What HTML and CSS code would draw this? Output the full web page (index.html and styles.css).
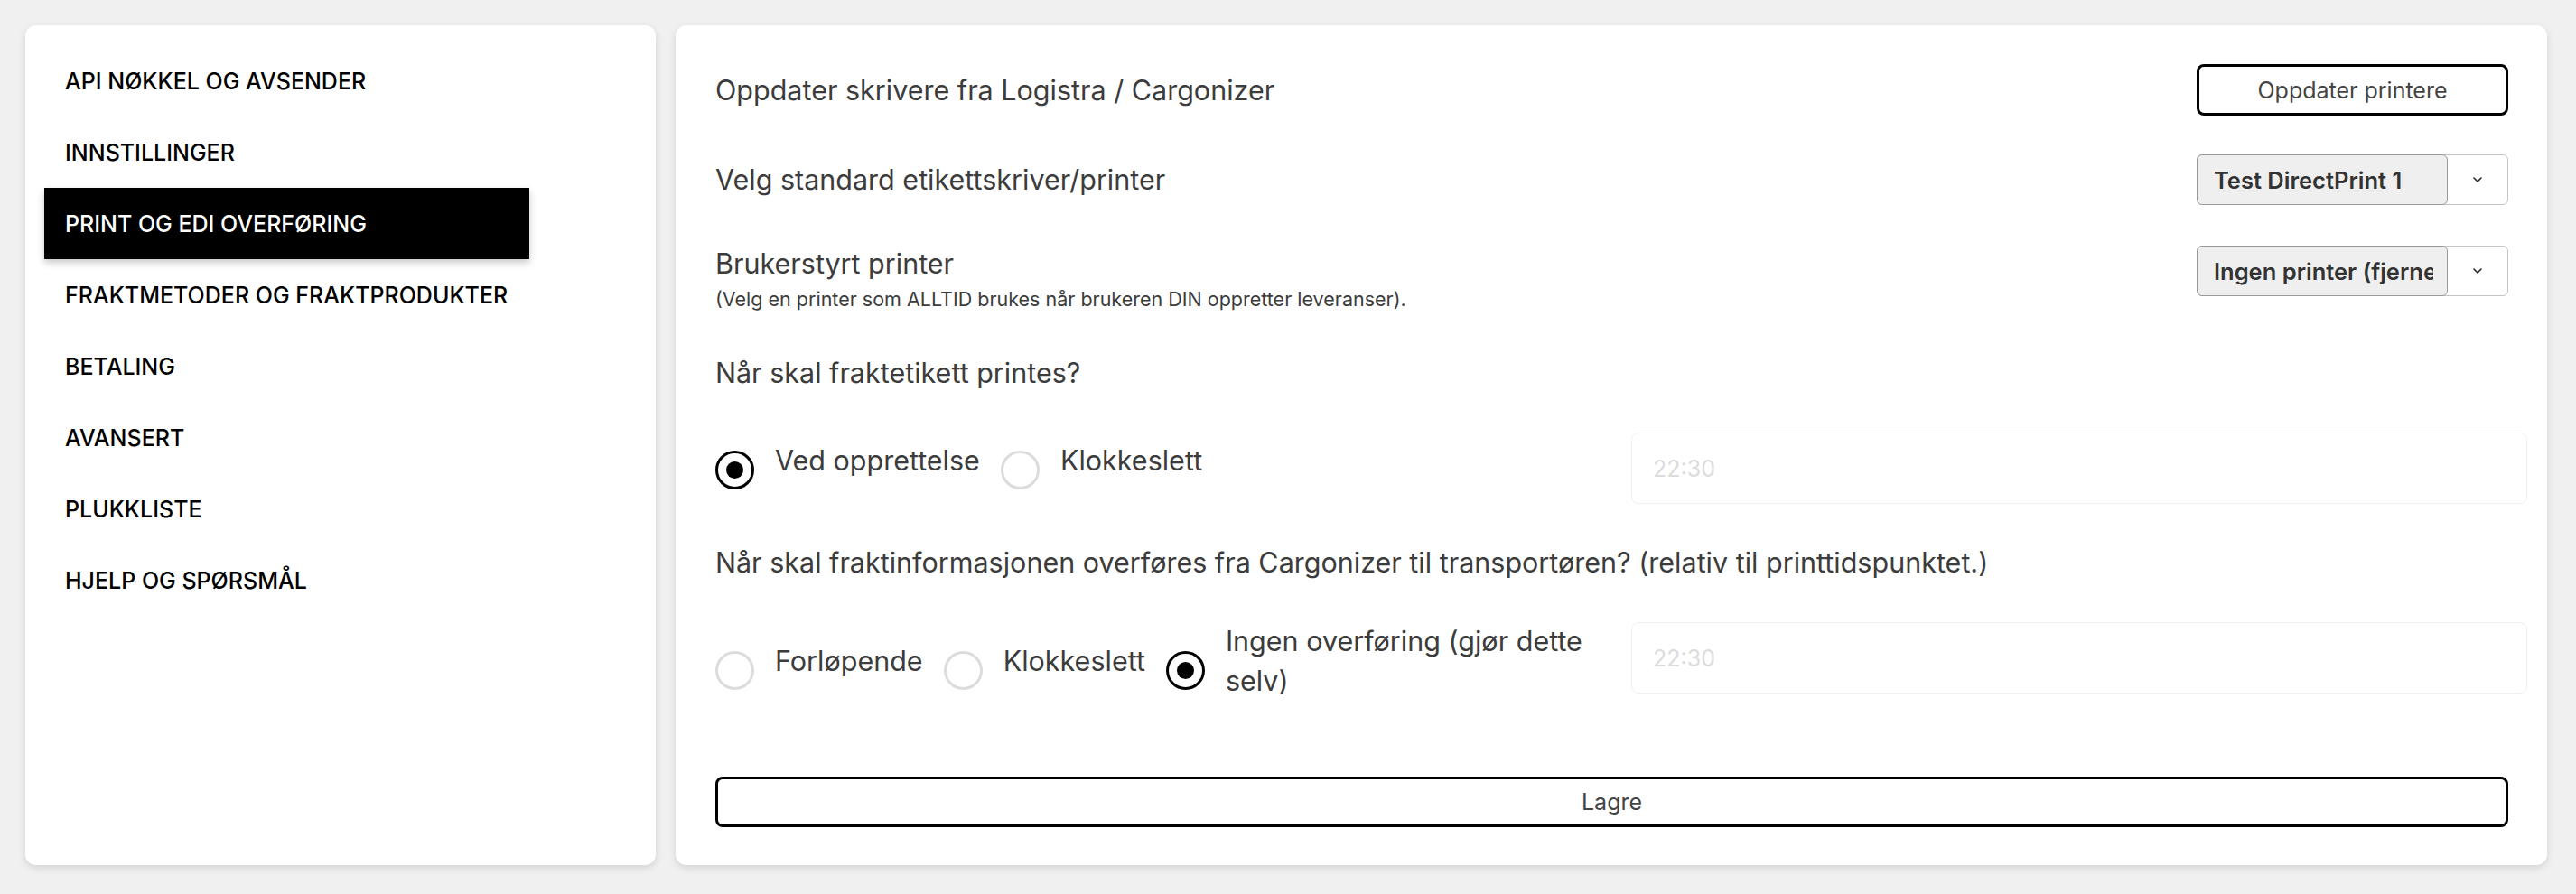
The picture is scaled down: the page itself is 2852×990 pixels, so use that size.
FILE: index.html
```html
<!DOCTYPE html>
<html lang="no">
<head>
<meta charset="utf-8">
<title>Print og EDI overføring</title>
<link rel="stylesheet" href="styles.css">
</head>
<body>
<div class="page">
  <aside class="card nav-card">
    <ul class="nav">
      <li class="nav-item">API NØKKEL OG AVSENDER</li>
      <li class="nav-item">INNSTILLINGER</li>
      <li class="nav-item active">PRINT OG EDI OVERFØRING</li>
      <li class="nav-item">FRAKTMETODER OG FRAKTPRODUKTER</li>
      <li class="nav-item">BETALING</li>
      <li class="nav-item">AVANSERT</li>
      <li class="nav-item">PLUKKLISTE</li>
      <li class="nav-item">HJELP OG SPØRSMÅL</li>
    </ul>
  </aside>
  <main class="card content">
    <div class="row">
      <div class="label">Oppdater skrivere fra Logistra / Cargonizer</div>
      <button class="btn btn-side">Oppdater printere</button>
    </div>
    <div class="row">
      <div class="label">Velg standard etikettskriver/printer</div>
      <div class="select">
        <span class="select-value"><span class="select-text">Test DirectPrint 1</span></span>
        <span class="select-arrow"><svg width="12" height="8" viewBox="0 0 12 8"><path d="M2 2l4 4 4-4" fill="none" stroke="#222" stroke-width="1.6" stroke-linecap="round" stroke-linejoin="round"/></svg></span>
      </div>
    </div>
    <div class="row row-top">
      <div>
        <div class="label">Brukerstyrt printer</div>
        <div class="hint">(Velg en printer som ALLTID brukes når brukeren DIN oppretter leveranser).</div>
      </div>
      <div class="select select-offset">
        <span class="select-value"><span class="select-text">Ingen printer (fjernet)</span></span>
        <span class="select-arrow"><svg width="12" height="8" viewBox="0 0 12 8"><path d="M2 2l4 4 4-4" fill="none" stroke="#222" stroke-width="1.6" stroke-linecap="round" stroke-linejoin="round"/></svg></span>
      </div>
    </div>
    <div class="label">Når skal fraktetikett printes?</div>
    <div class="choice-row">
      <div class="radios">
        <label class="radio"><input type="radio" name="print" checked><span>Ved opprettelse</span></label>
        <label class="radio"><input type="radio" name="print"><span>Klokkeslett</span></label>
      </div>
      <input class="time time-first" type="text" placeholder="22:30">
    </div>
    <div class="label">Når skal fraktinformasjonen overføres fra Cargonizer til transportøren? (relativ til printtidspunktet.)</div>
    <div class="choice-row">
      <div class="radios">
        <label class="radio"><input type="radio" name="edi"><span>Forløpende</span></label>
        <label class="radio"><input type="radio" name="edi"><span>Klokkeslett</span></label>
        <label class="radio"><input type="radio" name="edi" checked><span>Ingen overføring (gjør dette selv)</span></label>
      </div>
      <input class="time" type="text" placeholder="22:30">
    </div>
    <button class="btn btn-block">Lagre</button>
  </main>
</div>
</body>
</html>
```
FILE: styles.css
```css
* { box-sizing: border-box; }

html, body {
  margin: 0;
  background: #f0f0f0;
  font-family: Inter, "Noto Sans", "Liberation Sans", sans-serif;
}

.page {
  display: flex;
  gap: 22px;
  height: 990px;
  padding: 28px 32px 32px 28px;
}

.card {
  background: #fff;
  border-radius: 12px;
  box-shadow: 0 3px 8px rgba(0, 0, 0, 0.12);
}

.nav-card {
  flex: 0 0 698px;
  padding: 22px 21px 21px;
}

.nav {
  list-style: none;
  margin: 0;
  padding: 0;
}

.nav-item {
  display: flex;
  align-items: center;
  width: 537px;
  height: 79px;
  padding: 0 23px;
  font-size: 25px;
  font-weight: 500;
  color: #000;
}

.nav-item.active {
  background: #000;
  color: #fff;
  box-shadow: 0 4px 8px rgba(0, 0, 0, 0.22);
}

.content {
  flex: 1;
  display: flex;
  flex-direction: column;
  gap: 43px;
  padding: 43px 43px 42px 44px;
  color: #3c3c3c;
}

.row {
  display: flex;
  justify-content: space-between;
  align-items: center;
}

.row-top { align-items: flex-start; }

.label {
  font-size: 30.5px;
  line-height: 44px;
  color: #3c3c3c;
}

.hint {
  font-size: 21.5px;
  line-height: 34px;
  color: #3c3c3c;
}

.btn {
  background: #fff;
  border: 3px solid #000;
  border-radius: 8px;
  font-family: inherit;
  font-size: 25px;
  color: #444;
  cursor: pointer;
}

.btn-side {
  width: 345px;
  height: 57px;
}

.btn-block {
  width: 100%;
  height: 56px;
  margin-top: 41px;
}

.select {
  display: flex;
  width: 345px;
  height: 56px;
  border: 1px solid #c4c4c4;
  border-radius: 6px;
  background: #fff;
}

.select-offset { margin-top: 2px; }

.select-value {
  flex: 0 0 278px;
  width: 278px;
  min-width: 0;
  margin: -1px 0 -1px -1px;
  padding: 0 15px 0 18px;
  display: flex;
  align-items: center;
  background: #efefef;
  border: 1px solid #9a9a9a;
  border-radius: 6px;
  font-size: 25.5px;
  font-weight: 600;
  color: #333;
}

.select-text {
  flex: 1;
  min-width: 0;
  overflow: hidden;
  white-space: nowrap;
}

.select-arrow {
  flex: 1;
  display: flex;
  align-items: center;
  justify-content: center;
}

.choice-row {
  display: grid;
  grid-template-columns: 1fr 1fr;
  column-gap: 22px;
  align-items: start;
  margin-right: -21px;
}

.radios {
  display: flex;
  gap: 23px;
}

.radio {
  display: flex;
  align-items: center;
  gap: 23px;
  font-size: 30.5px;
  line-height: 44px;
  color: #3c3c3c;
}

.radio input {
  appearance: none;
  -webkit-appearance: none;
  flex: 0 0 43px;
  width: 43px;
  height: 43px;
  margin: 21px 0 0 0;
  border: 3px solid #dcdcdc;
  border-radius: 50%;
  background: #fff;
  display: grid;
  place-items: center;
}

.radio input:checked {
  border-color: #000;
}

.radio input:checked::after {
  content: "";
  width: 19px;
  height: 19px;
  border-radius: 50%;
  background: #000;
}

.time {
  height: 79px;
  margin-top: 1px;
  padding: 0 23px;
  border: 1px solid #f0f0f0;
  border-radius: 8px;
  background: #fff;
  font-family: inherit;
  font-size: 25px;
  color: #333;
  outline: none;
}

.time::placeholder { color: #dcdcdc; }
```
